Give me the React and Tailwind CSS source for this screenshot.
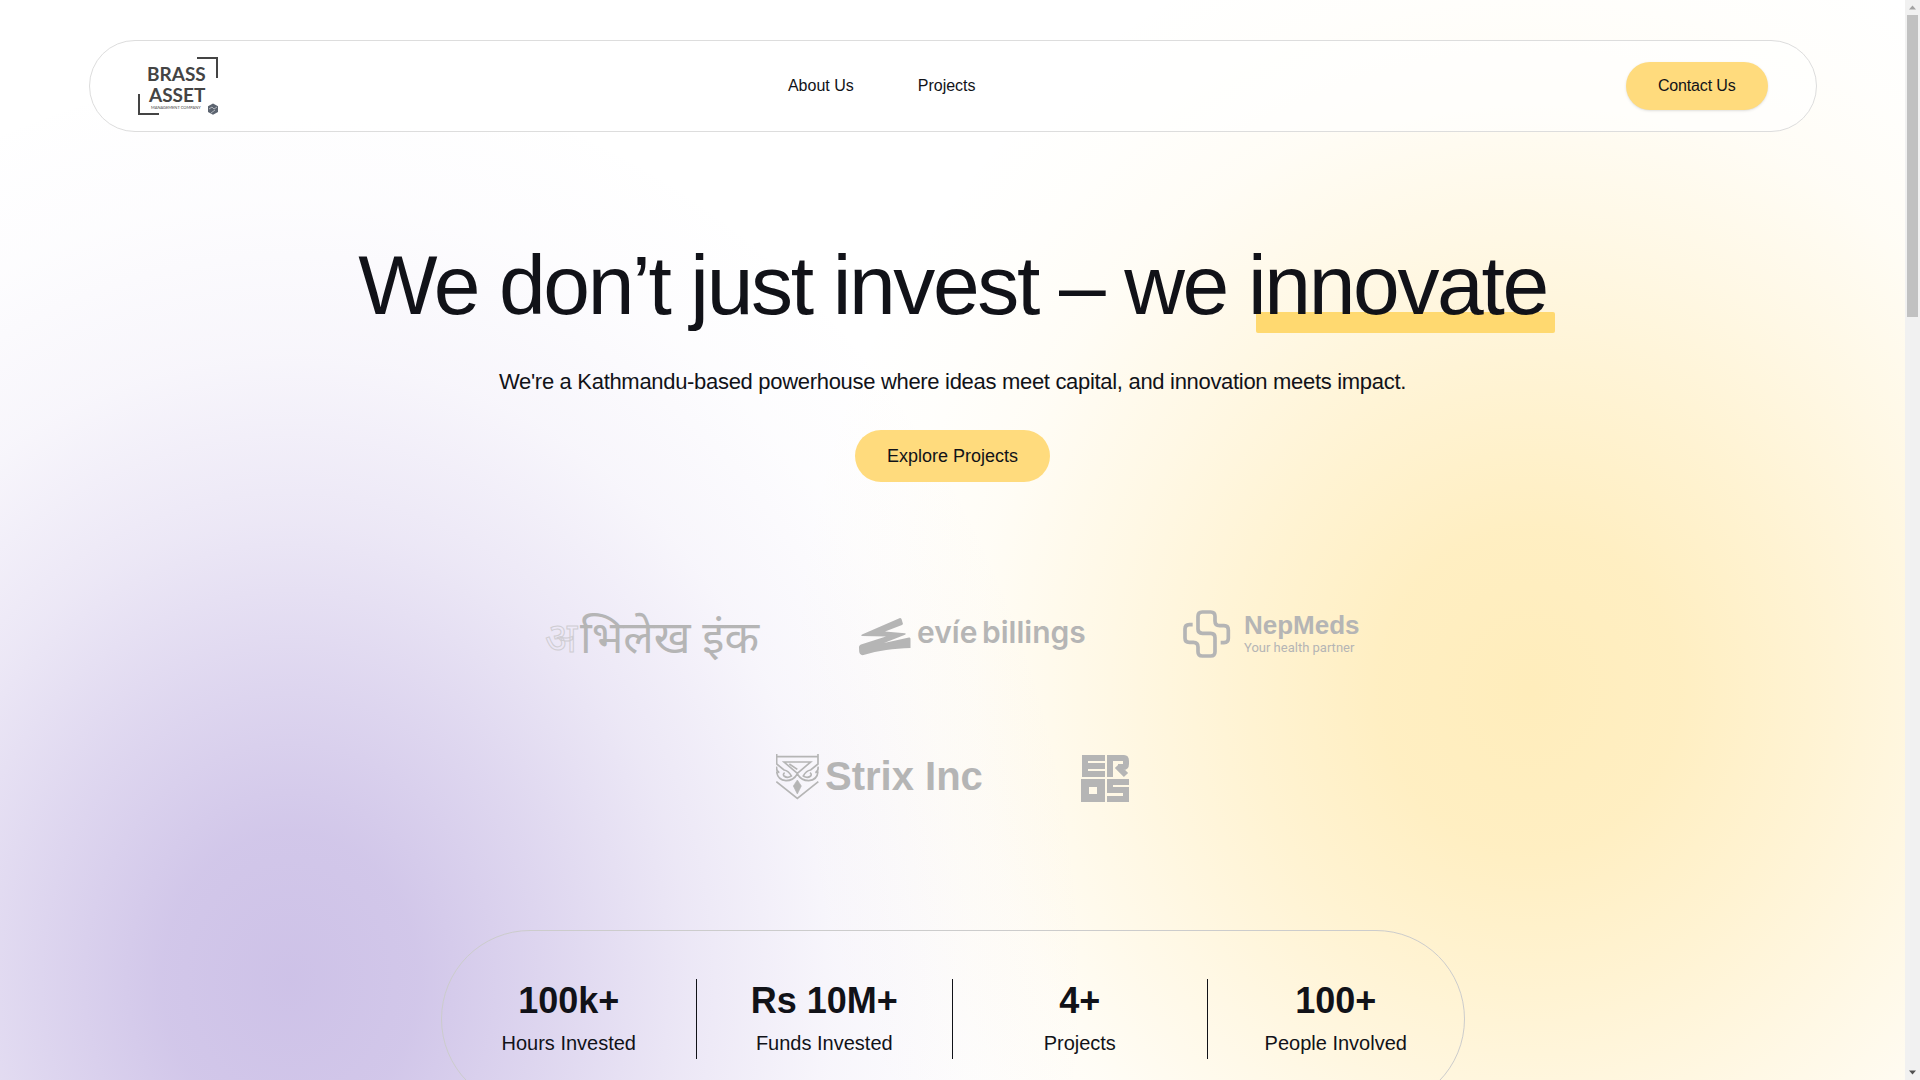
const NAV_LINKS = [
  { label: 'About Us', href: '#about' },
  { label: 'Projects', href: '#projects' },
];

const STATS = [
  { value: '100k+', label: 'Hours Invested' },
  { value: 'Rs 10M+', label: 'Funds Invested' },
  { value: '4+', label: 'Projects' },
  { value: '100+', label: 'People Involved' },
];

function BrandLogo() {
  return (
    <svg width="80" height="58" viewBox="0 0 80 58" role="img" aria-label="Brass Asset Management Company">
      <g fill="none" stroke="#444444" strokeWidth="2">
        <path d="M59 1h20v20" />
        <path d="M1 37v20h20" />
      </g>
      <g fill="#444444" fontFamily="Lato, sans-serif">
        <text x="9" y="24" fontSize="19" fontWeight="700">BRASS</text>
        <text x="11" y="45" fontSize="19" fontWeight="700">ASSET</text>
        <text x="13" y="52" fontSize="4">MANAGEMENT COMPANY</text>
      </g>
      <path d="M75 46.500l5 2.800v5.600l-5 2.800-5-2.800v-5.600z" fill="#5c6470" />
      <path d="M71 52l3-2 2 2 3-2M73 56l4-3" fill="none" stroke="#d5d8dc" strokeWidth="0.7" />
    </svg>
  );
}

function AbhilekhLogo() {
  return (
    <svg width="212" height="48" viewBox="0 0 212 48" className="overflow-visible" role="img" aria-label="अभिलेख इंक">
      <g fontFamily="'Noto Sans Devanagari', 'Noto Sans', sans-serif">
        <text x="-2" y="42" fontSize="42" fill="none" stroke="#cfcdd2" strokeWidth="1">अ</text>
        <text x="33" y="43" fontSize="45" fill="#b5b5b5">भिलेख इंक</text>
      </g>
    </svg>
  );
}

function EvieLogo() {
  return (
    <svg width="226" height="48" viewBox="0 0 226 48" className="overflow-visible" role="img" aria-label="evie billings">
      <path
        d="M4 24.500 42 8q1 0 1.500 1l1.500 5-1 1-17 6.500 20 1.700c1 .3 1 1 0 1.500L26 33l25-5.500c1 0 1.500.5 1.500 1.500V38c-17 .5-32 2.500-47 7-2.500.6-4-1-4.300-3.500l-.2-4c0-1.500.7-2.500 2-3L28 26.500 4 26c-1 0-1-1 0-1.500z"
        fill="#b5b5b5"
      />
      <g fill="#b5b5b5" fontFamily="Inter, sans-serif" fontSize="30" fontWeight="600">
        <text x="59" y="33">evíe</text>
        <text x="124" y="33">billings</text>
      </g>
    </svg>
  );
}

function NepMedsLogo() {
  return (
    <svg width="176" height="48" viewBox="0 0 176 48" className="overflow-visible" role="img" aria-label="NepMeds, Your health partner">
      <path
        d="M98 104H88q-13 0-13 13v27q0 13 13 13h12q14 0 14 14v14q0 13 13 13h25q13 0 13-13v-42q0-13-13-13h-25q-13 0-13-13V79q0-13 13-13h25q13 0 13 13v14q0 14 14 14h13q13 0 13 13v25q0 13-13 13h-10"
        transform="translate(-23 -20) scale(0.3333)"
        fill="none"
        stroke="#b5b5b5"
        strokeWidth="11"
      />
      <g fill="#b5b5b5">
        <text x="61" y="24" fontFamily="'Liberation Sans', Arial, sans-serif" fontSize="26" fontWeight="700">NepMeds</text>
        <text x="61" y="42" fontFamily="Roboto, sans-serif" fontSize="13">Your health partner</text>
      </g>
    </svg>
  );
}

function StrixLogo() {
  return (
    <svg width="206" height="48" viewBox="0 0 206 48" role="img" aria-label="Strix Inc">
      <g transform="translate(-16 -14) scale(0.3333)" fill="none" stroke="#b5b5b5" strokeWidth="5">
        <path d="M50 42v30l22 18q14 2 22 18-12 8-22 0-4-6 2-10M50 50h124M174 42v30l-22 18q-14 2-22 18 12 8 22 0 4-6-2-10" />
        <path d="M112 100 72 66h80zM88 72l24 16M50 80q-2 14 8 18M174 80q2 14-8 18" />
        <path d="M50 94q2 26 28 28 22 0 34-20 12 20 34 20 26-2 28-28" />
        <path d="M49 125l63 50 63-50" />
        <path d="M112 120l12 18-12 24-12-24z" fill="#b5b5b5" strokeWidth="2" />
      </g>
      <text x="49" y="36" fill="#b5b5b5" fontFamily="'Liberation Sans', Arial, sans-serif" fontSize="40" fontWeight="700">
        Strix Inc
      </text>
    </svg>
  );
}

// four square tiles, each cut by thin slits
function ErosLogo() {
  return (
    <svg width="48" height="48" viewBox="0 0 48 48" role="img" aria-label="EROS">
      <g fill="none" stroke="#b5b5b5" strokeWidth="6">
        <path d="M4 1v22M1 4h23M4 12h20M4 20h20" />
        <path d="M29 1v22M26 4h17q2 0 2 3v3q0 3-3 3h-5M36 12l9 9" />
        <path d="M4 29h16v15H4z" strokeWidth="8" />
        <path d="M48 28H29v8h16v9H26" />
      </g>
    </svg>
  );
}

function Header() {
  return (
    <header className="mx-auto flex h-[92px] w-full max-w-[1728px] items-center justify-between rounded-full border border-[#dddddd] bg-white/60 px-12">
      <a href="#home">
        <BrandLogo />
      </a>
      <nav className="flex gap-16 pr-20">
        {NAV_LINKS.map((link) => (
          <a key={link.label} href={link.href}>{link.label}</a>
        ))}
      </nav>
      <button type="button" className="h-12 rounded-full bg-[#ffdb7d] px-8 tracking-[-0.01em] shadow-sm">
        Contact Us
      </button>
    </header>
  );
}

function Hero() {
  return (
    <section className="mt-26 flex flex-col items-center text-center">
      <h1 className="text-[84px] leading-[98px] tracking-[-0.028em]">
        We don’t just invest – we{' '}
        <span className="relative inline-block">
          <span className="absolute bottom-px left-2 -right-2 h-[21px] rounded-xs bg-[#ffd970]" />
          <span className="relative">innovate</span>
        </span>
      </h1>
      <p className="mt-8 text-[22px] leading-8 tracking-[-0.014em]">
        We're a Kathmandu-based powerhouse where ideas meet capital, and innovation meets impact.
      </p>
      <button type="button" className="mt-8 rounded-full bg-[#ffdb7d] px-8 py-3 text-lg">
        Explore Projects
      </button>
    </section>
  );
}

function Partners() {
  return (
    <section className="mt-32 flex flex-col items-center gap-24">
      <div className="flex gap-[99px]">
        <AbhilekhLogo />
        <EvieLogo />
        <NepMedsLogo />
      </div>
      <div className="flex gap-[99px]">
        <StrixLogo />
        <ErosLogo />
      </div>
    </section>
  );
}

function Stats() {
  return (
    <section className="mx-auto mt-32 grid w-full max-w-5xl grid-cols-4 divide-x divide-[#111218] rounded-full border border-[#cccccc] py-12">
      {STATS.map((stat) => (
        <div key={stat.label} className="flex h-20 flex-col items-center justify-center gap-2">
          <p className="text-4xl font-bold">{stat.value}</p>
          <p className="text-xl">{stat.label}</p>
        </div>
      ))}
    </section>
  );
}

function Scrollbar() {
  return (
    <div className="flex h-full w-[15px] flex-col items-center justify-between bg-[#f1f1f1]" aria-hidden="true">
      <div className="flex flex-col items-center">
        <svg width="15" height="15" viewBox="0 0 15 15">
          <path d="M4 9.500h7L7.500 5.500z" fill="#a3a3a3" />
        </svg>
        <div className="h-[302px] w-[11px] bg-[#c1c1c1]" />
      </div>
      <svg width="15" height="15" viewBox="0 0 15 15">
        <path d="M4 5.500h7L7.500 9.500z" fill="#505050" />
      </svg>
    </div>
  );
}

const GLOWS =
  'bg-[radial-gradient(ellipse_800px_920px_at_290px_980px,rgba(150,125,205,0.47)_0%,rgba(150,125,205,0.43)_16%,rgba(150,125,205,0.31)_33%,rgba(150,125,205,0.18)_50%,rgba(150,125,205,0.07)_68%,rgba(150,125,205,0.02)_85%,rgba(150,125,205,0)_100%),radial-gradient(ellipse_740px_800px_at_1530px_690px,rgba(255,212,95,0.42)_0%,rgba(255,212,95,0.38)_20%,rgba(255,212,95,0.28)_38%,rgba(255,212,95,0.16)_57%,rgba(255,212,95,0.06)_75%,rgba(255,212,95,0.02)_88%,rgba(255,212,95,0)_100%)]';

export default function App() {
  return (
    <div className="flex h-screen overflow-hidden bg-white font-['Liberation_Sans',Arial,sans-serif] text-[#111218]">
      <main className={`flex-1 overflow-hidden pt-10 ${GLOWS}`}>
        <Header />
        <Hero />
        <Partners />
        <Stats />
      </main>
      <Scrollbar />
    </div>
  );
}
